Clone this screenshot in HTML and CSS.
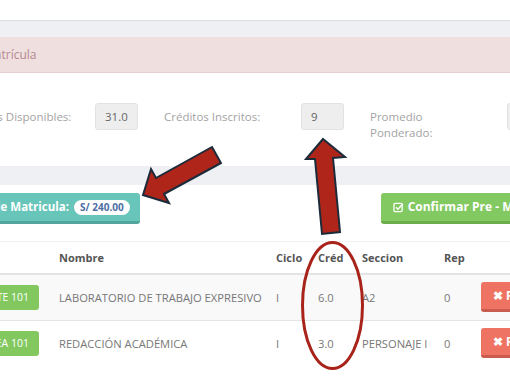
FILE: index.html
```html
<!DOCTYPE html>
<html lang="es">
<head>
  <meta charset="UTF-8">
  <meta name="viewport" content="width=device-width, initial-scale=1.0">
  <title>Pre - Matrícula</title>
  <link rel="stylesheet" href="styles.css">
</head>
<body>
  <div class="wrap">
    <!-- caja superior -->
    <div class="box box-top"></div>

    <!-- caja de creditos -->
    <div class="box box-info">
      <div class="alert">Matrícula</div>
      <div class="form-row">
        <div class="group">
          <label>Créditos Disponibles:</label>
          <div class="input">31.0</div>
        </div>
        <div class="group">
          <label>Créditos Inscritos:</label>
          <div class="input">9</div>
        </div>
        <div class="group">
          <label class="label-wrap">Promedio Ponderado:</label>
          <div class="input"></div>
        </div>
      </div>
    </div>

    <!-- caja de cursos -->
    <div class="box box-cursos">
      <div class="actions">
        <button class="btn btn-teal">Costo de Matricula: <span class="badge">S/ 240.00</span></button>
        <button class="btn btn-green">
          <svg class="ico" viewBox="0 0 12 12" width="11" height="11"><rect x="1" y="1.5" width="9" height="9" rx="1.5" fill="none" stroke="#fff" stroke-width="1.4"/><path d="M3.2 5.8 L5.3 7.9 L10.8 2.2" fill="none" stroke="#fff" stroke-width="1.6"/></svg>
          Confirmar Pre - Matrícula
        </button>
      </div>

      <table class="tabla">
        <colgroup>
          <col style="width:93px">
          <col style="width:217px">
          <col style="width:42px">
          <col style="width:44px">
          <col style="width:82px">
          <col style="width:37px">
          <col>
        </colgroup>
        <thead>
          <tr>
            <th>Curso</th>
            <th>Nombre</th>
            <th>Ciclo</th>
            <th>Créd</th>
            <th>Seccion</th>
            <th>Rep</th>
            <th></th>
          </tr>
        </thead>
        <tbody>
          <tr>
            <td><span class="code">ARTE 101</span></td>
            <td>LABORATORIO DE TRABAJO EXPRESIVO</td>
            <td>I</td>
            <td>6.0</td>
            <td>A2</td>
            <td>0</td>
            <td><button class="btn btn-red">&#10006; Retirar</button></td>
          </tr>
          <tr>
            <td><span class="code">AREA 101</span></td>
            <td>REDACCIÓN ACADÉMICA</td>
            <td>I</td>
            <td>3.0</td>
            <td>PERSONAJE I</td>
            <td>0</td>
            <td><button class="btn btn-red">&#10006; Retirar</button></td>
          </tr>
        </tbody>
      </table>
    </div>
  </div>

  <!-- anotaciones -->
  <svg class="notes" viewBox="0 0 510 382" width="510" height="382">
    <polygon points="212,147 221,163 164,194 169,203 143,195 151,169 156,178" fill="#b0251a" stroke="#1c2b3a" stroke-width="2" stroke-linejoin="miter"/>
    <polygon points="323,139 345,157 333,158 340,232 322,234 315,159 306,159" fill="#b0251a" stroke="#1c2b3a" stroke-width="2" stroke-linejoin="miter"/>
    <ellipse cx="332.5" cy="305.5" rx="30" ry="63" fill="none" stroke="#a8231a" stroke-width="3"/>
  </svg>
</body>
</html>
```

FILE: styles.css
```css
* {
  margin: 0;
  padding: 0;
  box-sizing: border-box;
}
html, body {
  width: 100%;
  height: 100%;
  background-color: #eef0f4;
  overflow: hidden;
  position: relative;
  font-family: "Open Sans", "Liberation Sans", sans-serif;
  font-size: 11.2px;
}
.wrap {
  margin-left: -42px;
  width: 622px;
}
.box {
  background: #fff;
}
.box-top {
  height: 21px;
  border-bottom: 1px solid #dcdde2;
}
.box-info {
  margin-top: 16px;
  height: 129px;
}
.alert {
  height: 36px;
  line-height: 35px;
  background: #efdfdf;
  border-bottom: 1px solid #e6cfd1;
  color: #b48a8f;
  padding-left: 26px;
  font-size: 12px;
}
.form-row {
  display: flex;
  padding-top: 30px;
}
.group {
  display: flex;
  align-items: flex-start;
  width: 206px;
}
.group label {
  width: 137px;
  padding-top: 6px;
  line-height: 16px;
  color: #a3a3a3;
  font-size: 11.5px;
  white-space: nowrap;
}
.group .label-wrap {
  white-space: normal;
  padding-right: 40px;
}
.input {
  width: 43px;
  height: 27px;
  flex-shrink: 0;
  background: #eeeeee;
  border: 1px solid #e2e2e2;
  border-radius: 3px;
  color: #666;
  padding: 5px 9px;
  line-height: 16px;
  font-size: 11.5px;
}
.box-cursos {
  margin-top: 19px;
  height: 200px;
  padding-top: 8px;
}
.actions {
  display: flex;
  justify-content: space-between;
  padding: 0 8px 0 0;
  height: 49px;
  border-bottom: 1px solid #f2f2f2;
}
.btn {
  font-family: inherit;
  font-size: 11.5px;
  font-weight: 700;
  color: #fff;
  border: none;
  border-radius: 3px;
  cursor: pointer;
  line-height: 16px;
}
.btn-teal {
  height: 31px;
  margin-left: -12px;
  padding: 6px 10px 6px 12px;
  background: #67c5b9;
  border-bottom: 3px solid #52a59a;
}
.badge {
  display: inline-block;
  background: #fff;
  color: #4c6fa3;
  border-radius: 9px;
  padding: 0 6px;
  font-size: 10px;
  line-height: 15px;
  margin-left: 2px;
}
.btn-green {
  height: 31px;
  padding: 6px 12px;
  background: #83c961;
  border-bottom: 3px solid #6aad4a;
  display: flex;
  align-items: center;
  gap: 4px;
  font-size: 12px;
}
.tabla {
  border-collapse: collapse;
  table-layout: fixed;
  width: 100%;
}
.tabla th {
  text-align: left;
  font-weight: 700;
  color: #555;
  padding: 7px 8px 7px 8px;
  height: 32px;
  border-bottom: 2px solid #e4e4e4;
  font-size: 11px;
}
.tabla td {
  color: #777;
  padding: 0 8px;
  height: 46px;
  border-top: 1px solid #e4e4e4;
  white-space: nowrap;
  vertical-align: middle;
}
.tabla tbody tr:first-child td {
  border-top: none;
}
.tabla tbody tr:nth-child(odd) {
  background: #f9f9f9;
}
.code {
  display: inline-block;
  vertical-align: middle;
  min-width: 73px;
  text-align: right;
  background: #82c85f;
  color: #fff;
  border-radius: 3px;
  padding: 4px 10px 4px 8px;
  line-height: 17px;
  font-size: 10.5px;
}
.btn-red {
  display: inline-block;
  vertical-align: middle;
  height: 30px;
  padding: 5px 12px;
  background: #ee7362;
  border-bottom: 3px solid #c95c4e;
}
.notes {
  position: absolute;
  top: 0;
  left: 0;
  pointer-events: none;
}
```
